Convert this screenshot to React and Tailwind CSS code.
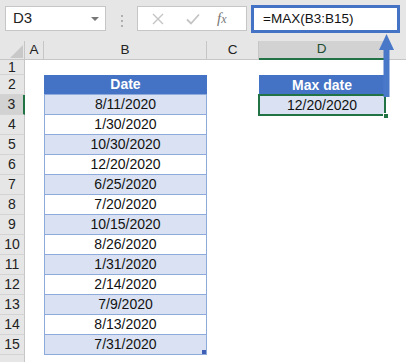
import React from "react";

const DATES = [
  "8/11/2020",
  "1/30/2020",
  "10/30/2020",
  "12/20/2020",
  "6/25/2020",
  "7/20/2020",
  "10/15/2020",
  "8/26/2020",
  "1/31/2020",
  "2/14/2020",
  "7/9/2020",
  "8/13/2020",
  "7/31/2020",
];

const RowHead = ({ n, h, selected }) => (
  <div
    className={`w-[25px] shrink-0 flex items-center justify-center text-[14px] text-[#222] border-b border-[#d4d4d4] ${
      selected
        ? "bg-[#d2d2d2] border-r-2 border-r-[#217346]"
        : "bg-[#e6e6e6] border-r border-r-[#c6c6c6]"
    } ${h}`}
  >
    {n}
  </div>
);

const App = () => {
  return (
    <div className="relative w-[406px] h-[362px] overflow-hidden bg-white font-['Liberation_Sans',Arial,sans-serif] text-black">
      {/* formula bar */}
      <div className="h-[41px] bg-[#e6e6e6] flex items-start pt-[5px]">
        <div className="ml-[5px] mt-[1px] w-[101px] h-[25px] bg-white border border-[#c6c6c6] flex items-center justify-between pl-[7px] pr-[6px] text-[15px] text-[#222]">
          <span>D3</span>
          <span className="w-0 h-0 border-x-[4px] border-x-transparent border-t-[4px] border-t-[#777]" />
        </div>
        {/* dots */}
        <div className="w-[31px] flex flex-col items-center gap-[3px] pt-[10px]">
          <span className="w-[2px] h-[2px] bg-[#b0b0b0]" />
          <span className="w-[2px] h-[2px] bg-[#b0b0b0]" />
          <span className="w-[2px] h-[2px] bg-[#b0b0b0]" />
        </div>
        <div className="mt-[1px] w-[110px] h-[25px] bg-white border border-[#c6c6c6] flex items-center">
          <svg width="12" height="12" viewBox="0 0 12 12" className="ml-[14px]">
            <path d="M1 1L11 11M11 1L1 11" stroke="#c4c4c4" strokeWidth="1.4" />
          </svg>
          <svg width="14" height="12" viewBox="0 0 14 12" className="ml-[22px]">
            <path d="M1 6.5L5 10.5L13 1.5" stroke="#c4c4c4" strokeWidth="1.8" fill="none" />
          </svg>
          <span className="ml-[17px] font-['Liberation_Serif',serif] italic text-[15px] text-[#777]">
            f<span className="text-[12px]">x</span>
          </span>
        </div>
        <div className="ml-[4px] w-[149px] h-[28px] border-[3px] border-[#4472c4] bg-white flex items-center pl-[9px] text-[13.5px] text-[#111]">
          =MAX(B3:B15)
        </div>
      </div>

      {/* column headers */}
      <div className="flex h-[19px] bg-[#e6e6e6] text-[13.5px] text-[#222]">
        <div className="w-[25px] shrink-0 relative border-r border-b border-[#c6c6c6]">
          <svg width="13" height="13" viewBox="0 0 13 13" className="absolute left-[10px] top-[4px]">
            <polygon points="13,0 13,13 0,13" fill="#c8c8c8" />
          </svg>
        </div>
        <div className="w-[19px] shrink-0 flex items-center justify-center border-r border-b border-[#c6c6c6]">
          A
        </div>
        <div className="w-[163px] shrink-0 flex items-center justify-center border-r border-b border-[#c6c6c6]">
          B
        </div>
        <div className="w-[52px] shrink-0 flex items-center justify-center border-r border-b border-[#c6c6c6]">
          C
        </div>
        <div className="w-[126px] shrink-0 flex items-center justify-center bg-[#d2d2d2] border-r border-r-[#c6c6c6] border-b-2 border-b-[#217346] text-[#1e4d33]">
          D
        </div>
        <div className="flex-1 border-b border-[#c6c6c6]" />
      </div>

      {/* row 1 */}
      <div className="flex h-[15px]">
        <RowHead n={1} h="h-[15px]" />
      </div>

      {/* row 2 : headers */}
      <div className="flex h-[20px] text-[14px]">
        <RowHead n={2} h="h-[20px]" />
        <div className="w-[19px] shrink-0" />
        <div className="w-[163px] shrink-0 bg-[#4472c4] text-white font-bold flex items-center justify-center border-b border-[#8eaadb]">
          Date
        </div>
        <div className="w-[52px] shrink-0" />
        <div className="w-[126px] shrink-0 bg-[#4472c4] text-white font-bold flex items-center justify-center">
          Max date
        </div>
      </div>

      {/* rows 3-15 */}
      {DATES.map((d, i) => {
        const row = i + 3;
        const banded = i % 2 === 0;
        return (
          <div key={row} className="flex h-[20px] text-[14px] text-[#111]">
            <RowHead n={row} h="h-[20px]" selected={row === 3} />
            <div className="w-[19px] shrink-0" />
            <div
              className={`relative w-[163px] shrink-0 flex items-center justify-center border-x border-b border-[#8eaadb] ${
                banded ? "bg-[#d9e1f2]" : "bg-white"
              }`}
            >
              {d}
              {row === 15 && (
                <span className="absolute right-[0px] bottom-[0px] w-[4px] h-[4px] bg-[#3f5fb5]" />
              )}
            </div>
            <div className="w-[52px] shrink-0" />
            {row === 3 && (
              <div className="relative w-[126px] shrink-0 bg-[#d9e1f2] flex items-center justify-center outline-2 outline-[#217346] -outline-offset-1">
                12/20/2020
                <span className="absolute -right-[4px] -bottom-[4px] w-[6px] h-[6px] bg-[#217346] border border-white" />
              </div>
            )}
          </div>
        );
      })}

      {/* row 16, cut off by the window */}
      <div className="flex h-[20px]">
        <RowHead n="" h="h-[20px]" />
      </div>

      {/* arrow from D3 to the formula */}
      <svg
        width="16"
        height="64"
        viewBox="0 0 16 64"
        className="absolute left-[379px] top-[34px]"
      >
        <polygon points="7.5,0 15,16 0,16" fill="#4a78c9" />
        <rect x="4.5" y="15" width="6" height="48" fill="#4a78c9" />
      </svg>
    </div>
  );
};

export default App;
